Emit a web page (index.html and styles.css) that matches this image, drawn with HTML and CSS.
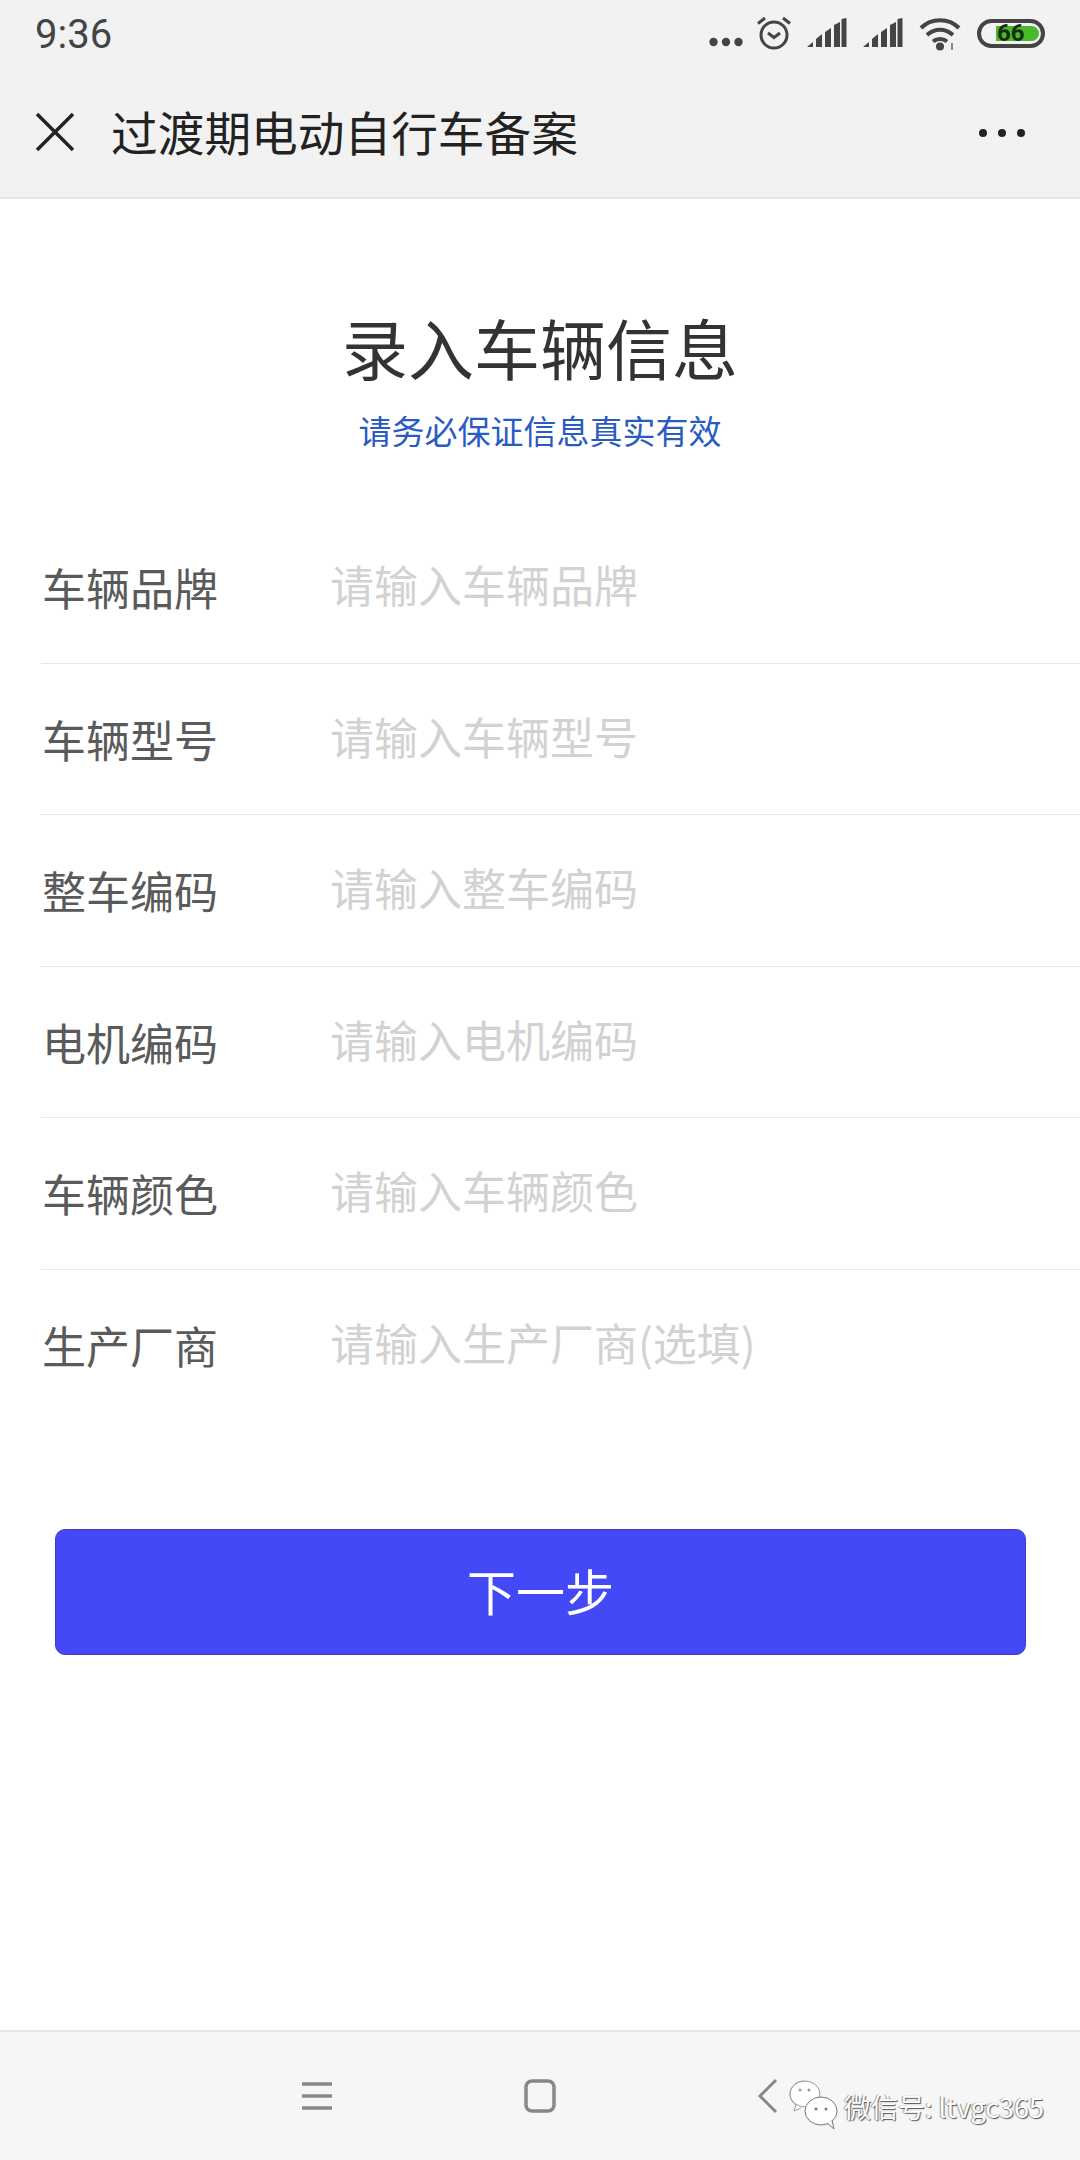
FILE: index.html
```html
<!DOCTYPE html>
<html lang="zh-CN">
<head>
    <meta charset="UTF-8">
    <meta name="viewport" content="width=device-width, initial-scale=1.0">
    <title>过渡期电动自行车备案</title>
    <link rel="stylesheet" href="styles.css">
</head>
<body>
<div class="page">

    <!-- Status bar -->
    <div class="status-bar">
        <span class="time">9:36</span>
        <div class="status-icons">
            <svg class="ic-dots" width="34" height="10" viewBox="0 0 34 10"><circle cx="4.500" cy="5" r="4.200" /><circle cx="17" cy="5" r="4.200" /><circle cx="29.500" cy="5" r="4.200" /></svg>
            <svg class="ic-alarm" width="36" height="34" viewBox="0 0 36 34"><circle cx="18" cy="19" r="13" fill="none" stroke="#444" stroke-width="3"/><path d="M12 17l6 4.500 6-4.500" fill="none" stroke="#444" stroke-width="3"/><path d="M2 7.500l7-5.500M34 7.500l-7-5.500" fill="none" stroke="#444" stroke-width="3"/></svg>
            <svg class="ic-signal" width="40" height="30" viewBox="0 0 40 30"><path d="M0 29l6-5v5zM9 21l6-5v13H9zM18 14l6-4v19h-6zM27 7l6-3v25h-6zM34.500 1l5-1v29h-5z" /></svg>
            <svg class="ic-signal" width="40" height="30" viewBox="0 0 40 30"><path d="M0 29l6-5v5zM9 21l6-5v13H9zM18 14l6-4v19h-6zM27 7l6-3v25h-6zM34.500 1l5-1v29h-5z" /></svg>
            <svg class="ic-wifi" width="42" height="34" viewBox="0 0 42 34"><path d="M2 11C12 .5 30 .5 40 11" fill="none" stroke="#444" stroke-width="4"/><path d="M8 18c7.500-7 18.500-7 26 0" fill="none" stroke="#444" stroke-width="4"/><path d="M14 24.500c4-3.500 10-3.500 14 0" fill="none" stroke="#444" stroke-width="4"/><circle cx="21" cy="29.500" r="4"/><path d="M33 26v7" stroke="#888" stroke-width="2"/></svg>
            <div class="battery">
                <div class="battery-fill"></div>
                <span class="battery-num">66</span>
            </div>
        </div>
    </div>

    <!-- Toolbar -->
    <div class="toolbar">
        <svg class="ic-close" width="40" height="40" viewBox="0 0 40 40"><path d="M2 2l36 36M38 2L2 38" fill="none" stroke="#222" stroke-width="3.500"/></svg>
        <h1 class="toolbar-title">过渡期电动自行车备案</h1>
        <svg class="ic-more" width="48" height="10" viewBox="0 0 48 10"><circle cx="5" cy="5" r="4"/><circle cx="24" cy="5" r="4"/><circle cx="43" cy="5" r="4"/></svg>
    </div>

    <!-- Form -->
    <div class="content">
        <h2 class="form-title">录入车辆信息</h2>
        <p class="form-sub">请务必保证信息真实有效</p>

        <div class="form">
            <div class="row"><span class="label">车辆品牌</span><span class="hint">请输入车辆品牌</span></div>
            <div class="row"><span class="label">车辆型号</span><span class="hint">请输入车辆型号</span></div>
            <div class="row"><span class="label">整车编码</span><span class="hint">请输入整车编码</span></div>
            <div class="row"><span class="label">电机编码</span><span class="hint">请输入电机编码</span></div>
            <div class="row"><span class="label">车辆颜色</span><span class="hint">请输入车辆颜色</span></div>
            <div class="row"><span class="label">生产厂商</span><span class="hint">请输入生产厂商(选填)</span></div>
        </div>

        <button class="next-btn">下一步</button>
    </div>

    <!-- Navigation bar -->
    <div class="nav-bar">
        <svg class="ic-menu" width="32" height="30" viewBox="0 0 32 30"><path d="M1 3h30M1 15h30M1 27h30" fill="none" stroke="#888" stroke-width="3.500"/></svg>
        <svg class="ic-home" width="32" height="34" viewBox="0 0 32 34"><rect x="2" y="2" width="28" height="30" rx="6" fill="none" stroke="#888" stroke-width="3.500"/></svg>
        <svg class="ic-back" width="22" height="36" viewBox="0 0 22 36"><path d="M19 2L3 18l16 16" fill="none" stroke="#888" stroke-width="3"/></svg>

        <!-- Watermark sits over the nav bar -->
        <div class="watermark">
            <svg class="ic-wechat" width="50" height="50" viewBox="0 0 50 50">
                <path d="M15 1C7 1 1 7 1 14c0 5 2.500 8.500 6 11l-2 6 7-3" fill="#fff" stroke="#999" stroke-width="1"/>
                <ellipse cx="16" cy="14" rx="15" ry="13" fill="#fff" stroke="#999" stroke-width="1"/>
                <ellipse cx="32" cy="31" rx="16" ry="14" fill="#fff" stroke="#777" stroke-width="1"/>
                <path d="M38 43l7 6-2-9" fill="#fff" stroke="#777" stroke-width="1"/>
                <circle cx="11" cy="10" r="1.500" fill="#999"/><circle cx="20" cy="10" r="1.500" fill="#999"/>
                <circle cx="27" cy="29" r="1.500" fill="#777"/><circle cx="37" cy="29" r="1.500" fill="#777"/>
            </svg>
            <span class="watermark-text">微信号: ltvgc365</span>
        </div>
    </div>

</div>
</body>
</html>
```

FILE: styles.css
```css
* {
    box-sizing: border-box;
}

body {
    font-family: "Liberation Sans", "Noto Sans CJK SC", sans-serif;
    background-color: #fff;
    margin: 0;
    padding: 0;
}

.page {
    display: flex;
    flex-direction: column;
    width: 1080px;
    height: 2160px;
    overflow: hidden;
}

/* status bar */
.status-bar {
    display: flex;
    align-items: center;
    justify-content: space-between;
    height: 66px;
    padding: 0 35px 0 35px;
    background-color: #f2f2f2;
}

.time {
    margin-top: 2px;
    font-family: Roboto, sans-serif;
    font-size: 40px;
    color: #444;
}

.status-icons {
    display: flex;
    align-items: center;
    fill: #444;
}

.ic-dots {
    margin-top: 18px;
    margin-right: 13px;
}

.ic-alarm {
    margin-right: 15px;
}

.ic-signal {
    margin-right: 16px;
}

.ic-wifi {
    margin-top: 2px;
    margin-right: 16px;
}

.battery {
    position: relative;
    width: 68px;
    height: 29px;
    border: 4px solid #444;
    border-radius: 15px;
    overflow: hidden;
}

.battery-fill {
    position: absolute;
    top: 3px;
    bottom: 3px;
    left: 15px;
    width: 43px;
    background-color: #4cb82c;
    border-radius: 0 10px 10px 0;
}

.battery-num {
    position: absolute;
    top: -3px;
    left: 16px;
    font-family: Roboto, sans-serif;
    font-size: 24px;
    font-weight: 700;
    line-height: 27px;
    color: #14300c;
}

/* toolbar */
.toolbar {
    display: flex;
    align-items: center;
    height: 133px;
    padding: 0 54px 0 35px;
    background-color: #f2f2f2;
    border-bottom: 2px solid #e6e6e6;
    fill: #222;
}

.ic-close {
    flex: none;
    margin-right: 36px;
}

.toolbar-title {
    flex: 1;
    margin: 0 0 3px;
    font-family: "Noto Sans CJK SC", sans-serif;
    font-size: 46.700px;
    font-weight: 400;
    color: #222;
}

.ic-more {
    margin-top: 2px;
}

/* form */
.content {
    flex: 1;
    padding-top: 107px;
}

.form-title {
    margin: 0;
    font-family: "Noto Sans CJK SC", sans-serif;
    font-size: 66px;
    font-weight: 400;
    line-height: 80px;
    color: #333;
    text-align: center;
}

.form-sub {
    margin: 22px 0 0;
    font-family: "Noto Sans CJK SC", sans-serif;
    font-size: 33px;
    line-height: 44px;
    color: #2a5bc4;
    text-align: center;
}

.form {
    margin-top: 60px;
    margin-left: 41px;
}

.row {
    display: flex;
    align-items: center;
    height: 151.500px;
    padding-bottom: 6px;
    border-bottom: 1px solid #e6e6e6;
    font-family: "Noto Sans CJK SC", sans-serif;
    font-size: 44px;
}

.row:last-child {
    border-bottom: none;
}

.label {
    width: 289px;
    padding-left: 1px;
    padding-top: 6px;
    color: #5a5a5a;
}

.hint {
    color: #d2d2d2;
}

.next-btn {
    display: block;
    width: 971px;
    height: 126px;
    margin: 108px 0 0 55px;
    padding: 0 0 6px;
    font-family: "Noto Sans CJK SC", sans-serif;
    font-size: 49px;
    color: #fff;
    background-color: #4349f7;
    border: 1px solid #3a3fc0;
    border-radius: 10px;
}

/* navigation bar */
.nav-bar {
    position: relative;
    display: flex;
    align-items: center;
    height: 130px;
    padding: 0 0 0 301px;
    background-color: #f6f6f6;
    border-top: 2px solid #e6e6e6;
}

.ic-home {
    margin-left: 191px;
}

.ic-back {
    margin-left: 201px;
}

.watermark {
    position: absolute;
    top: 48px;
    left: 789px;
    display: flex;
    align-items: center;
}

.ic-wechat {
    margin-right: 5px;
}

.watermark-text {
    margin-top: 2px;
    font-family: "Noto Sans CJK SC", sans-serif;
    font-size: 27px;
    color: #fff;
    text-shadow: 1px 1px 1px #555, -1px 0 1px #999;
}
```
